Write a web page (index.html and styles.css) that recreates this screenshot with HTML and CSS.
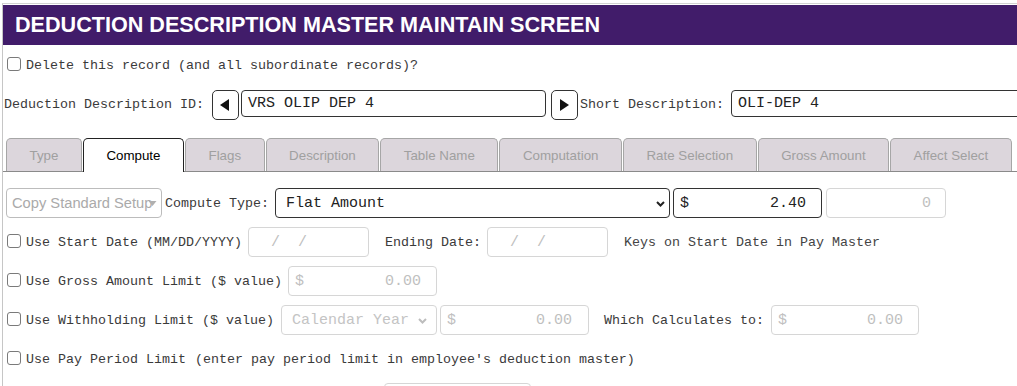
FILE: index.html
```html
<!DOCTYPE html>
<html>
<head>
<meta charset="utf-8">
<title>Deduction Description Master Maintain Screen</title>
<link rel="stylesheet" href="styles.css">
</head>
<body>
<div class="screen">
  <div class="title">DEDUCTION DESCRIPTION MASTER MAINTAIN SCREEN</div>

  <div class="row row-delete">
    <input type="checkbox" class="cb">
    <span class="lbl">Delete this record (and all subordinate records)?</span>
  </div>

  <div class="row row-id">
    <span class="lbl id-lbl">Deduction Description ID:</span>
    <div class="navbtn nav-prev"><svg width="10" height="12" viewBox="0 0 10 12"><polygon points="9,0 9,12 0,6" fill="#111"/></svg></div>
    <div class="field txt id-field">VRS OLIP DEP 4</div>
    <div class="navbtn nav-next"><svg width="10" height="12" viewBox="0 0 10 12"><polygon points="1,0 1,12 10,6" fill="#111"/></svg></div>
    <span class="lbl short-lbl">Short Description:</span>
    <div class="field txt short-field">OLI-DEP 4</div>
  </div>

  <div class="tabs">
    <div class="tab">Type</div>
    <div class="tab active">Compute</div>
    <div class="tab">Flags</div>
    <div class="tab">Description</div>
    <div class="tab">Table Name</div>
    <div class="tab">Computation</div>
    <div class="tab">Rate Selection</div>
    <div class="tab">Gross Amount</div>
    <div class="tab">Affect Select</div>
  </div>

  <div class="row row-compute">
    <div class="select copy-select"><span class="sel-text">Copy Standard Setup</span><svg class="chev" width="9" height="7" viewBox="0 0 9 7"><polygon points="0.5,1 8.5,1 4.5,6" fill="#b0b0b0"/></svg></div>
    <span class="lbl compute-lbl">Compute Type:</span>
    <div class="select mono-select compute-select"><span class="sel-text">Flat Amount</span><svg class="chev" width="9" height="6" viewBox="0 0 9 6"><polyline points="1,1 4.5,4.5 8,1" fill="none" stroke="#222" stroke-width="2"/></svg></div>
    <div class="field money amount-field"><span>$</span><span>2.40</span></div>
    <div class="field money disabled zero-field"><span></span><span>0</span></div>
  </div>

  <div class="row row-opt">
    <input type="checkbox" class="cb">
    <span class="lbl">Use Start Date (MM/DD/YYYY)</span>
    <div class="field date disabled start-date">  /  /</div>
    <span class="lbl end-lbl">Ending Date:</span>
    <div class="field date disabled end-date">  /  /</div>
    <span class="lbl keys-lbl">Keys on Start Date in Pay Master</span>
  </div>

  <div class="row row-opt">
    <input type="checkbox" class="cb">
    <span class="lbl">Use Gross Amount Limit ($ value)</span>
    <div class="field money disabled gross-field"><span>$</span><span>0.00</span></div>
  </div>

  <div class="row row-opt">
    <input type="checkbox" class="cb">
    <span class="lbl">Use Withholding Limit ($ value)</span>
    <div class="select mono-select disabled period-select"><span class="sel-text">Calendar Year</span><svg class="chev" width="9" height="6" viewBox="0 0 9 6"><polyline points="1,1 4.5,4.5 8,1" fill="none" stroke="#bdbdbd" stroke-width="2"/></svg></div>
    <div class="field money disabled wh-field"><span>$</span><span>0.00</span></div>
    <span class="lbl calc-lbl">Which Calculates to:</span>
    <div class="field money disabled calc-field"><span>$</span><span>0.00</span></div>
  </div>

  <div class="row row-opt">
    <input type="checkbox" class="cb">
    <span class="lbl">Use Pay Period Limit</span>
    <span class="lbl note-lbl">(enter pay period limit in employee's deduction master)</span>
  </div>

  <div class="row row-opt">
    <div class="field money disabled next-field"><span></span><span></span></div>
  </div>
</div>
</body>
</html>
```

FILE: styles.css
```css
* { box-sizing: border-box; }
html, body { margin: 0; padding: 0; background: #fff; overflow: hidden; }
body {
  padding-top: 3px;
  font-family: "Liberation Mono", "Courier New", monospace;
  font-size: 13.33px;
  color: #3a3a3a;
}
.screen {
  margin-left: 2px;
  border-left: 1px solid #c6c6c6;
  border-top: 1px solid #d2d2d2;
  padding-top: 1px;
  min-height: 420px;
}
.title {
  height: 40px;
  background: #411c6a;
  color: #fff;
  font: bold 21.6px "Liberation Sans", Arial, sans-serif;
  display: flex;
  align-items: center;
  padding-left: 12px;
  white-space: nowrap;
}
.row {
  display: flex;
  align-items: center;
  height: 30px;
  white-space: nowrap;
}
.row > * { flex-shrink: 0; }
.lbl { white-space: pre; }
.cb {
  appearance: none;
  -webkit-appearance: none;
  width: 14px;
  height: 14px;
  margin: 0 5px 2px 4px;
  border: 1px solid #7a7a7a;
  border-radius: 3px;
  background: #fff;
}
.row-delete { margin-top: 7px; height: 26px; }

/* ID row */
.row-id { margin-top: 12px; align-items: flex-start; }
.id-lbl { padding-left: 1px; align-self: center; margin-bottom: 2px; }
.navbtn {
  width: 27px;
  height: 30px;
  border: 1px solid #333;
  border-radius: 5px;
  background: #fff;
  display: flex;
  align-items: center;
  justify-content: center;
}
.nav-prev { margin-left: 8px; }
.nav-next { margin-left: 5px; }
.short-lbl { margin-left: 2px; align-self: center; margin-bottom: 2px; }

.field {
  height: 30px;
  border: 1px solid #333;
  border-radius: 4px;
  background: #fff;
  font-family: "Liberation Mono", "Courier New", monospace;
  font-size: 15px;
  color: #222;
  display: flex;
  align-items: center;
}
.txt { padding-left: 6px; height: 27px; }
.id-field { margin-left: 2px; width: 305px; }
.short-field { margin-left: 7px; width: 320px; }

/* Tabs */
.tabs {
  margin-top: 18px;
  height: 34px;
  display: flex;
  align-items: flex-start;
  gap: 1px;
  padding-left: 3px;
  border-bottom: 1px solid #8a8a8a;
}
.tab {
  height: 33px;
  padding: 0 22.5px;
  border: 1px solid #a6a6a6;
  border-bottom: none;
  border-radius: 5px 5px 0 0;
  background: #dcd6dc;
  color: #a0a0a0;
  font: 13.33px "Liberation Sans", Arial, sans-serif;
  display: flex;
  align-items: center;
  flex-shrink: 0;
}
.tab.active {
  height: 34px;
  background: #fff;
  border-color: #222;
  color: #000;
}

/* Compute row */
.row-compute { margin-top: 16px; }
.select {
  position: relative;
  height: 30px;
  border: 1px solid #333;
  border-radius: 4px;
  background: #fff;
  display: flex;
  align-items: center;
  overflow: hidden;
}
.select .chev { position: absolute; right: 5px; top: 12px; }
.copy-select {
  margin-left: 3px;
  width: 156px;
  border-color: #bcbcbc;
  color: #aaa;
  font: 14.7px "Liberation Sans", Arial, sans-serif;
  padding-left: 5px;
}
.copy-select .chev { right: 4px; top: 11px; }
.mono-select {
  font-family: "Liberation Mono", "Courier New", monospace;
  font-size: 15px;
  color: #222;
  padding-left: 10px;
}
.compute-lbl { margin-left: 3px; }
.compute-select { margin-left: 6px; width: 395px; }
.compute-select .chev { right: 4px; }

.money {
  justify-content: space-between;
  padding: 0 15px 0 6px;
  white-space: pre;
}
.amount-field { margin-left: 3px; width: 149px; }
.zero-field { margin-left: 4px; width: 120px; padding-right: 14px; }

.disabled {
  border-color: #d6d6d6;
  color: #c0c0c0;
}
.select.disabled { color: #c4c4c4; }

/* option rows */
.row-opt { margin-top: 9px; }
.date { padding-left: 4px; white-space: pre; width: 121px; }
.start-date { margin-left: 6px; }
.end-lbl { margin-left: 16px; }
.end-date { margin-left: 6px; }
.keys-lbl { margin-left: 16px; color: #444; }

.gross-field { margin-left: 6px; width: 149px; }

.period-select { margin-left: 7px; width: 156px; }
.period-select .chev { right: 9px; }
.wh-field { margin-left: 3px; width: 149px; padding-right: 16px; }
.calc-lbl { margin-left: 15px; }
.calc-field { margin-left: 7px; width: 148px; }

.note-lbl { margin-left: 9px; }

.next-field { margin-left: 381px; width: 147px; }
```
